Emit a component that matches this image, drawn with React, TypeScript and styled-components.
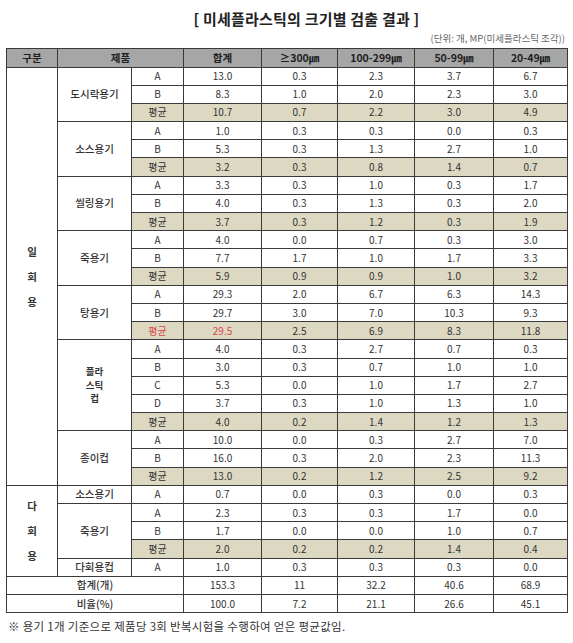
import styled, { createGlobalStyle } from "styled-components";

const GlobalStyle = createGlobalStyle`
  body {
    margin: 0;
    background: #ffffff;
    font-family: "Noto Sans CJK KR", "Noto Sans", sans-serif;
    color: #2b2b2b;
  }
`;

const Page = styled.div`
  width: 573px;
  padding: 9px 6px 0 6px;
  box-sizing: border-box;
`;

const Title = styled.h1`
  margin: 0;
  padding-left: 40px;
  text-align: center;
  font-size: 15px;
  line-height: 20px;
  font-weight: 700;
  color: #222;
  letter-spacing: 0.2px;
`;

const Unit = styled.div`
  margin-top: 3px;
  padding-right: 2px;
  text-align: right;
  font-size: 9.5px;
  line-height: 12px;
  color: #666;
`;

const Table = styled.table`
  margin-top: 4px;
  width: 561px;
  table-layout: fixed;
  border-collapse: collapse;
  border: 1.5px solid #3a3a3a;
`;

const Tr = styled.tr<{ $head?: boolean }>`
  height: ${(p) => (p.$head ? "18.5px" : "18.2px")};
`;

const Th = styled.th`
  padding: 0;
  background: #a6a6a6;
  border: 1px solid #3a3a3a;
  font-size: 10.5px;
  font-weight: 700;
  color: #1e1e1e;
  text-align: center;
  line-height: 16px;
`;

const Td = styled.td<{ $avg?: boolean; $red?: boolean }>`
  padding: 0;
  border: 1px solid #3a3a3a;
  background: ${(p) => (p.$avg ? "#ddd8c2" : "#ffffff")};
  color: ${(p) => (p.$red ? "#d8474a" : "#333")};
  font-size: 10px;
  text-align: center;
  line-height: 16px;
  white-space: nowrap;
`;

const GroupCell = styled.td`
  padding: 0;
  border: 1px solid #3a3a3a;
  font-size: 10.5px;
  font-weight: 700;
  line-height: 25px;
  text-align: center;
  color: #333;
`;

const NameCell = styled.td<{ $stack?: boolean }>`
  padding: 0;
  border: 1px solid #3a3a3a;
  font-size: ${(p) => (p.$stack ? "9.5px" : "10.5px")};
  font-weight: ${(p) => (p.$stack ? 700 : 500)};
  line-height: ${(p) => (p.$stack ? "13.5px" : "16px")};
  text-align: center;
  color: #333;
`;

const Footer = styled.p`
  margin: 5px 0 0 2px;
  font-size: 11.5px;
  line-height: 16px;
  color: #333;
  letter-spacing: 0.3px;
`;

type Row = { k: string; v: string[]; red?: boolean };
type Group = { name: string; stack?: boolean; rows: Row[] };

const oneTime: Group[] = [
  {
    name: "도시락용기",
    rows: [
      { k: "A", v: ["13.0", "0.3", "2.3", "3.7", "6.7"] },
      { k: "B", v: ["8.3", "1.0", "2.0", "2.3", "3.0"] },
      { k: "평균", v: ["10.7", "0.7", "2.2", "3.0", "4.9"] },
    ],
  },
  {
    name: "소스용기",
    rows: [
      { k: "A", v: ["1.0", "0.3", "0.3", "0.0", "0.3"] },
      { k: "B", v: ["5.3", "0.3", "1.3", "2.7", "1.0"] },
      { k: "평균", v: ["3.2", "0.3", "0.8", "1.4", "0.7"] },
    ],
  },
  {
    name: "씰링용기",
    rows: [
      { k: "A", v: ["3.3", "0.3", "1.0", "0.3", "1.7"] },
      { k: "B", v: ["4.0", "0.3", "1.3", "0.3", "2.0"] },
      { k: "평균", v: ["3.7", "0.3", "1.2", "0.3", "1.9"] },
    ],
  },
  {
    name: "죽용기",
    rows: [
      { k: "A", v: ["4.0", "0.0", "0.7", "0.3", "3.0"] },
      { k: "B", v: ["7.7", "1.7", "1.0", "1.7", "3.3"] },
      { k: "평균", v: ["5.9", "0.9", "0.9", "1.0", "3.2"] },
    ],
  },
  {
    name: "탕용기",
    rows: [
      { k: "A", v: ["29.3", "2.0", "6.7", "6.3", "14.3"] },
      { k: "B", v: ["29.7", "3.0", "7.0", "10.3", "9.3"] },
      { k: "평균", v: ["29.5", "2.5", "6.9", "8.3", "11.8"], red: true },
    ],
  },
  {
    name: "플라\n스틱\n컵",
    stack: true,
    rows: [
      { k: "A", v: ["4.0", "0.3", "2.7", "0.7", "0.3"] },
      { k: "B", v: ["3.0", "0.3", "0.7", "1.0", "1.0"] },
      { k: "C", v: ["5.3", "0.0", "1.0", "1.7", "2.7"] },
      { k: "D", v: ["3.7", "0.3", "1.0", "1.3", "1.0"] },
      { k: "평균", v: ["4.0", "0.2", "1.4", "1.2", "1.3"] },
    ],
  },
  {
    name: "종이컵",
    rows: [
      { k: "A", v: ["10.0", "0.0", "0.3", "2.7", "7.0"] },
      { k: "B", v: ["16.0", "0.3", "2.0", "2.3", "11.3"] },
      { k: "평균", v: ["13.0", "0.2", "1.2", "2.5", "9.2"] },
    ],
  },
];

const multiUse: Group[] = [
  { name: "소스용기", rows: [{ k: "A", v: ["0.7", "0.0", "0.3", "0.0", "0.3"] }] },
  {
    name: "죽용기",
    rows: [
      { k: "A", v: ["2.3", "0.3", "0.3", "1.7", "0.0"] },
      { k: "B", v: ["1.7", "0.0", "0.0", "1.0", "0.7"] },
      { k: "평균", v: ["2.0", "0.2", "0.2", "1.4", "0.4"] },
    ],
  },
  { name: "다회용컵", rows: [{ k: "A", v: ["1.0", "0.3", "0.3", "0.3", "0.0"] }] },
];

const totals = [
  { label: "합계(개)", v: ["153.3", "11", "32.2", "40.6", "68.9"] },
  { label: "비율(%)", v: ["100.0", "7.2", "21.1", "26.6", "45.1"] },
];

const colWidths = [51, 74, 52, 78, 76, 77, 79, 74];
const heads = ["합계", "≥300㎛", "100-299㎛", "50-99㎛", "20-49㎛"];

const Lines = ({ text }: { text: string }) => (
  <>
    {text.split("\n").map((t, i) => (
      <span key={i}>
        {i > 0 && <br />}
        {t}
      </span>
    ))}
  </>
);

const renderSection = (label: string, groups: Group[]) => {
  const total = groups.reduce((n, g) => n + g.rows.length, 0);
  return groups.flatMap((g, gi) =>
    g.rows.map((r, ri) => {
      const avg = r.k === "평균";
      return (
        <Tr key={`${label}-${gi}-${ri}`}>
          {gi === 0 && ri === 0 && (
            <GroupCell rowSpan={total}>
              <Lines text={label} />
            </GroupCell>
          )}
          {ri === 0 && (
            <NameCell rowSpan={g.rows.length} $stack={g.stack}>
              <Lines text={g.name} />
            </NameCell>
          )}
          <Td $avg={avg} $red={r.red}>
            {r.k}
          </Td>
          {r.v.map((x, xi) => (
            <Td key={xi} $avg={avg} $red={r.red && xi === 0}>
              {x}
            </Td>
          ))}
        </Tr>
      );
    })
  );
};

export default function App() {
  return (
    <Page>
      <GlobalStyle />
      <Title>[ 미세플라스틱의 크기별 검출 결과 ]</Title>
      <Unit>(단위: 개, MP(미세플라스틱 조각))</Unit>
      <Table>
        <colgroup>
          {colWidths.map((w, i) => (
            <col key={i} style={{ width: w }} />
          ))}
        </colgroup>
        <thead>
          <Tr $head>
            <Th>구분</Th>
            <Th colSpan={2}>제품</Th>
            {heads.map((h) => (
              <Th key={h}>{h}</Th>
            ))}
          </Tr>
        </thead>
        <tbody>
          {renderSection("일\n회\n용", oneTime)}
          {renderSection("다\n회\n용", multiUse)}
          {totals.map((t) => (
            <Tr key={t.label}>
              <NameCell colSpan={3}>{t.label}</NameCell>
              {t.v.map((x, i) => (
                <Td key={i}>{x}</Td>
              ))}
            </Tr>
          ))}
        </tbody>
      </Table>
      <Footer>※ 용기 1개 기준으로 제품당 3회 반복시험을 수행하여 얻은 평균값임.</Footer>
    </Page>
  );
}
